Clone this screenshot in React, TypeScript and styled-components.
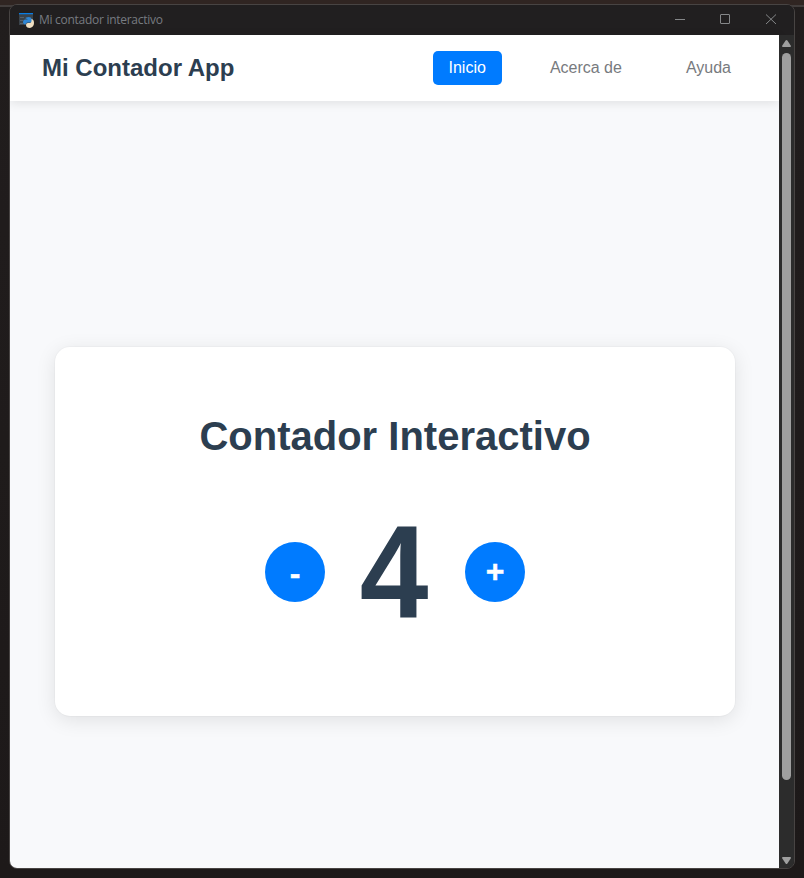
import React, { useState } from "react";
import styled, { createGlobalStyle } from "styled-components";

const GlobalStyle = createGlobalStyle`
  * { box-sizing: border-box; }
  html, body { margin: 0; padding: 0; }
  body { font-family: "Liberation Sans", Arial, sans-serif; overflow: hidden; }
`;

const Desktop = styled.div`
  width: 804px;
  height: 878px;
  padding: 4px 9px 9px;
  background: linear-gradient(#302522 0, #302522 5px, #423d3c 5px, #423d3c 7px, #211d1d 7px, #1d1919 100%);
`;

const Window = styled.div`
  width: 786px;
  height: 865px;
  border: 1px solid #484443;
  border-radius: 8px;
  overflow: hidden;
  display: flex;
  flex-direction: column;
  background: #211f20;
`;

const TitleBar = styled.header`
  height: 30px;
  flex: none;
  display: flex;
  align-items: center;
  padding-left: 9px;
  background: #211f20;
`;

const AppIcon = styled.svg`
  width: 15px;
  height: 15px;
  flex: none;
`;

const WindowTitle = styled.span`
  flex: 1;
  margin-left: 5px;
  font: 12px/16px "Open Sans", "Noto Sans", sans-serif;
  letter-spacing: -0.28px;
  color: #777b80;
`;

const Caption = styled.svg`
  width: 137px;
  height: 30px;
  flex: none;
  fill: none;
  stroke: #858789;
`;

const Viewport = styled.div`
  flex: 1;
  display: flex;
  min-height: 0;
`;

const Page = styled.div`
  width: 769px;
  display: flex;
  flex-direction: column;
  background: #f8f9fb;
`;

const NavBar = styled.nav`
  height: 66px;
  flex: none;
  display: flex;
  align-items: center;
  justify-content: space-between;
  padding: 0 32px;
  background: #fff;
  box-shadow: 0 2px 10px rgba(0, 0, 0, 0.1);
`;

const Brand = styled.h1`
  margin: 0;
  font-size: 24px;
  line-height: 28px;
  color: #2c3e50;
`;

const Links = styled.div`
  display: flex;
  gap: 32px;
`;

const NavLink = styled.a<{ $active?: boolean }>`
  padding: 8px 16px;
  border-radius: 5px;
  font-size: 16px;
  line-height: 18px;
  text-decoration: none;
  color: ${(p) => (p.$active ? "#fff" : "#777a7e")};
  background: ${(p) => (p.$active ? "#007bff" : "transparent")};
`;

const Main = styled.main`
  flex: 1;
  display: flex;
  justify-content: center;
  padding: 246px 44px 0 45px;
`;

const Card = styled.section`
  width: 680px;
  height: 369px;
  padding-top: 66px;
  border-radius: 15px;
  background: #fff;
  box-shadow: 0 0 0 1px rgba(0, 0, 0, 0.02), 0 4px 20px rgba(0, 0, 0, 0.1);
  display: flex;
  flex-direction: column;
  align-items: center;
`;

const Heading = styled.h2`
  margin: 0;
  font-size: 40px;
  line-height: 46px;
  white-space: nowrap;
  color: #2c3e50;
`;

const Counter = styled.div`
  display: flex;
  align-items: center;
  margin-top: 39px;
`;

const RoundButton = styled.button<{ $drop?: number; $lift?: number }>`
  width: 60px;
  height: 60px;
  padding: ${(p) => p.$drop ?? 0}px 0 ${(p) => p.$lift ?? 0}px;
  border: 0;
  border-radius: 50%;
  font: bold 32px/34px "Liberation Sans", Arial, sans-serif;
  -webkit-text-stroke: 0.4px #fff;
  color: #fff;
  background: #007bff;
`;

const Value = styled.span`
  width: 140px;
  font-size: 128px;
  line-height: 147px;
  font-weight: bold;
  text-align: center;
  color: #2c3e50;
  transform: translate(-1px, 0.5px) scale(0.965, 1.03);
`;

const ScrollTrack = styled.div`
  width: 15px;
  padding: 4px 3px 3px;
  display: flex;
  flex-direction: column;
  align-items: center;
  background: #2c2c2c;
`;

const Arrow = styled.svg`
  width: 9px;
  height: 9px;
  flex: none;
  fill: #9f9f9f;
`;

const ScrollThumb = styled.div`
  width: 9px;
  height: 727px;
  margin: 5px 0 auto;
  border-radius: 5px;
  background: #9f9f9f;
`;

export default function App() {
  const [count, setCount] = useState(4);
  return (
    <>
      <GlobalStyle />
      <Desktop>
        <Window>
          <TitleBar>
            <AppIcon viewBox="0 0 15 15">
              <path d="M0 0h14v12H0z" fill="#3a434b" />
              <path d="M0 0h14v1.2H0z" fill="#087de5" />
              <path d="M1 4.5h4M1 7.5h3M1 10.5h3" stroke="#56606a" />
              <path d="M12 6q3 0 3 4t-4 5q-4 0-4-3 0-2 2-2h2q1 0 1-2z" fill="#efdfc2" />
              <path d="M6.5 5.500q0-1.500 3-1.500T12.500 6v2q0 1.500-1.500 1.500H8.500Q7 9.500 6.500 11.500 4 11.500 4 9t2-2.500h2.500V6z" fill="#2f86d4" />
            </AppIcon>
            <WindowTitle>Mi contador interactivo</WindowTitle>
            <Caption viewBox="0 0 137 30">
              <path d="M18 14.500h10" />
              <rect x="63.500" y="9.500" width="9" height="9" rx="0.500" />
              <path d="M109 9.500l10 9.500M119 9.500l-10 9.500" />
            </Caption>
          </TitleBar>
          <Viewport>
            <Page>
              <NavBar>
                <Brand>Mi Contador App</Brand>
                <Links>
                  <NavLink $active>Inicio</NavLink>
                  <NavLink>Acerca de</NavLink>
                  <NavLink>Ayuda</NavLink>
                </Links>
              </NavBar>
              <Main>
                <Card>
                  <Heading>Contador Interactivo</Heading>
                  <Counter>
                    <RoundButton $drop={2} onClick={() => setCount(count - 1)}>-</RoundButton>
                    <Value>{count}</Value>
                    <RoundButton $lift={2} onClick={() => setCount(count + 1)}>+</RoundButton>
                  </Counter>
                </Card>
              </Main>
            </Page>
            <ScrollTrack>
              <Arrow viewBox="0 0 9 9">
                <path d="M3.600 1.500Q4.500 0.300 5.400 1.500L9 7Q9 8 8 8H1Q0 8 0 7z" />
              </Arrow>
              <ScrollThumb />
              <Arrow viewBox="0 0 9 9">
                <path d="M3.600 7.500Q4.500 8.700 5.400 7.500L9 2Q9 1 8 1H1Q0 1 0 2z" />
              </Arrow>
            </ScrollTrack>
          </Viewport>
        </Window>
      </Desktop>
    </>
  );
}
